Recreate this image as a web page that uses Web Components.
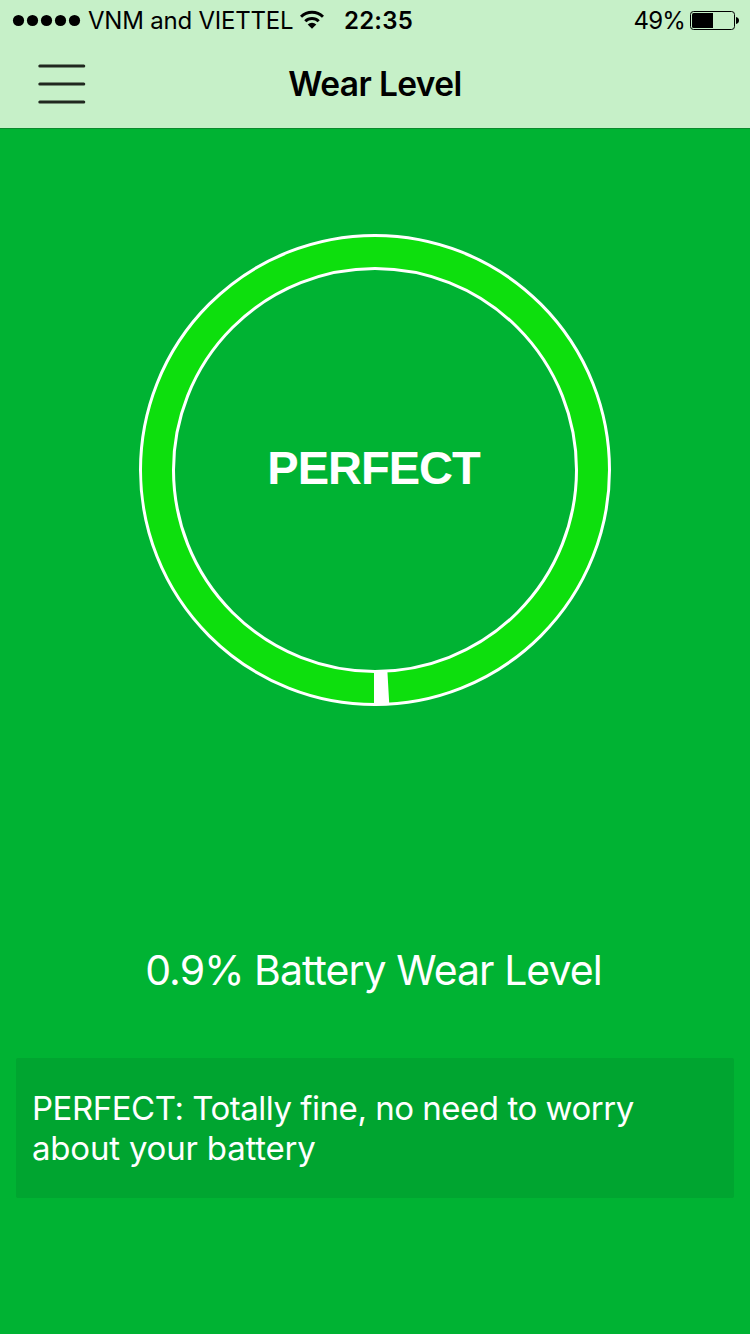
<!DOCTYPE html>
<html lang="en">
<head>
<meta charset="UTF-8">
<meta name="viewport" content="width=device-width, initial-scale=1.0">
<title>Wear Level</title>
<style>
    body {
        margin: 0;
        font-family: Inter, "Liberation Sans", sans-serif;
        background: #00b333;
    }
</style>
</head>
<body>
<wear-app></wear-app>

<script>
class StatusBar extends HTMLElement {
    connectedCallback() {
        this.attachShadow({ mode: 'open' });
        this.shadowRoot.innerHTML = `
            <style>
                :host {
                    display: flex;
                    align-items: center;
                    height: 40px;
                    padding: 0 11px 0 12px;
                    font-size: 24px;
                    line-height: 40px;
                    white-space: nowrap;
                }
                svg { display: block; flex: none; }
                span { padding-top: 2px; line-height: 38px; }
                .carrier { margin-left: 7px; width: 206px; letter-spacing: -0.22px; }
                .wifi { margin-left: 6px; }
                .time { margin-left: 20px; font-weight: 600; letter-spacing: 0.2px; }
                .percent { margin-left: auto; letter-spacing: -0.8px; }
                .battery { margin-left: 5px; }
            </style>
            <svg width="69" height="40" viewBox="0 0 69 40">
                <circle cx="6.5" cy="20.5" r="5.6"/>
                <circle cx="20.5" cy="20.5" r="5.6"/>
                <circle cx="34.5" cy="20.5" r="5.6"/>
                <circle cx="48.5" cy="20.5" r="5.6"/>
                <circle cx="62.5" cy="20.5" r="5.6"/>
            </svg>
            <span class="carrier">${this.getAttribute('carrier')}</span>
            <svg class="wifi" width="24" height="40" viewBox="0 0 24 40" fill="none" stroke="#000" stroke-width="3">
                <path d="M1 16.8a15.6 15.6 0 0 1 22 0"/>
                <path d="M5.3 21.2a9.5 9.5 0 0 1 13.4 0"/>
                <path d="M12 28.8l-4.3-4.4a6.1 6.1 0 0 1 8.6 0z" fill="#000" stroke="none"/>
            </svg>
            <span class="time">${this.getAttribute('time')}</span>
            <span class="percent">${this.getAttribute('battery')}%</span>
            <svg class="battery" width="49" height="40" viewBox="0 0 49 40">
                <rect x="0.5" y="11.5" width="44" height="18" rx="3" fill="none" stroke="#000"/>
                <rect x="2" y="13" width="21" height="15" rx="1.5"/>
                <rect x="20" y="13" width="3" height="15"/>
                <path d="M46 17c2 .4 3 1.600 3 3.500s-1 3.100-3 3.500z"/>
            </svg>
        `;
    }
}
customElements.define('status-bar', StatusBar);

class NavBar extends HTMLElement {
    connectedCallback() {
        this.attachShadow({ mode: 'open' });
        this.shadowRoot.innerHTML = `
            <style>
                :host {
                    display: grid;
                    grid-template-columns: 100px 1fr 100px;
                    align-items: center;
                    height: 88px;
                }
                button {
                    display: block;
                    margin: 0 0 0 38px;
                    padding: 0;
                    border: 0;
                    background: none;
                }
                svg { display: block; }
                h1 {
                    margin: 0;
                    padding-top: 1px;
                    font-size: 33.5px;
                    line-height: 87px;
                    font-weight: 600;
                    letter-spacing: -0.6px;
                    text-align: center;
                }
            </style>
            <button type="button" aria-label="Menu">
                <svg width="48" height="88" viewBox="0 0 48 88" stroke="#20281f" stroke-width="3" stroke-linecap="round">
                    <path d="M1.800 26.100h44M1.800 44h44M1.800 61.900h44"/>
                </svg>
            </button>
            <h1><slot></slot></h1>
        `;
    }
}
customElements.define('nav-bar', NavBar);

class WearRing extends HTMLElement {
    connectedCallback() {
        this.attachShadow({ mode: 'open' });
        const angle = Number(this.getAttribute('value')) / 100 * 2 * Math.PI;
        // the worn slice starts at the bottom and runs counter-clockwise
        const point = r => `${(236 + r * Math.sin(angle)).toFixed(2)} ${(236 + r * Math.cos(angle)).toFixed(2)}`;
        this.shadowRoot.innerHTML = `
            <style>
                :host {
                    display: grid;
                    place-items: center;
                    width: 472px;
                    height: 472px;
                }
                svg, .label { grid-area: 1 / 1; }
                svg { display: block; }
                .label {
                    padding: 0 3px 5px 0;
                    color: #fff;
                    font: bold 47px/56px "Liberation Sans", Arial, sans-serif;
                    letter-spacing: -1px;
                }
            </style>
            <svg width="472" height="472" viewBox="0 0 472 472" fill="none" stroke="#fff">
                <circle cx="236" cy="236" r="218" stroke="#0ddf0d" stroke-width="33"/>
                <path d="M236 437.500L${point(201.5)}L${point(234.5)}L236 470.500z" fill="#fff" stroke-width="2"/>
                <circle cx="236" cy="236" r="234.500" stroke-width="3"/>
                <circle cx="236" cy="236" r="201.500" stroke-width="3"/>
            </svg>
            <span class="label"><slot></slot></span>
        `;
    }
}
customElements.define('wear-ring', WearRing);

class InfoCard extends HTMLElement {
    connectedCallback() {
        this.attachShadow({ mode: 'open' });
        this.shadowRoot.innerHTML = `
            <style>
                :host {
                    display: block;
                    box-sizing: border-box;
                    height: 140px;
                    padding: 30px 16px;
                    border-radius: 2px;
                    background: #00a530;
                    color: #fff;
                    font-size: 33px;
                    line-height: 40px;
                }
                p { margin: 0; letter-spacing: -0.2px; }
                p::first-line { letter-spacing: -0.48px; }
            </style>
            <p><slot></slot></p>
        `;
    }
}
customElements.define('info-card', InfoCard);

class WearApp extends HTMLElement {
    connectedCallback() {
        this.attachShadow({ mode: 'open' });
        this.shadowRoot.innerHTML = `
            <style>
                :host {
                    display: flex;
                    flex-direction: column;
                    height: 1334px;
                    overflow: hidden;
                    background: #00b333;
                }
                header {
                    background: #c6f0c8;
                    border-bottom: 1px solid #0b8a2d;
                }
                main {
                    display: flex;
                    flex-direction: column;
                    align-items: center;
                    padding: 105px 16px 0;
                }
                .level {
                    margin: 234px 0 58px;
                    padding-right: 3px;
                    color: #fff;
                    font-size: 41px;
                    line-height: 60px;
                    letter-spacing: -0.95px;
                }
                info-card { align-self: stretch; }
            </style>
            <header>
                <status-bar carrier="VNM and VIETTEL" time="22:35" battery="49"></status-bar>
                <nav-bar>Wear Level</nav-bar>
            </header>
            <main>
                <wear-ring value="0.9">PERFECT</wear-ring>
                <p class="level">0.9% Battery Wear Level</p>
                <info-card>PERFECT: Totally fine, no need to worry about your battery</info-card>
            </main>
        `;
    }
}
customElements.define('wear-app', WearApp);
</script>
</body>
</html>
